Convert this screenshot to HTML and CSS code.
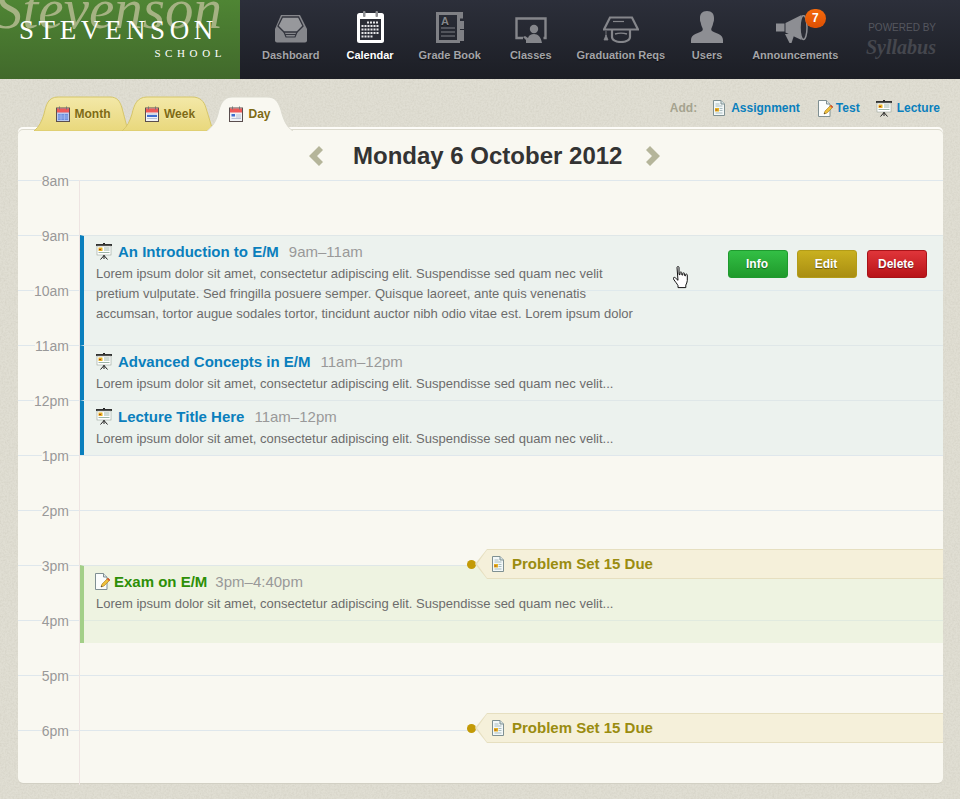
FILE: index.html

```html
<!DOCTYPE html>
<html>
<head>
    <title>Calendar - Stevenson School</title>
    <link rel="stylesheet" href="styles.css">
</head>
<body>
    <!-- shared little icons -->
    <svg class="defs" width="0" height="0">
        <defs>
            <filter id="paper">
                <feTurbulence type="fractalNoise" baseFrequency="0.55" numOctaves="3" seed="4"/>
                <feColorMatrix values="0 0 0 0 0.45  0 0 0 0 0.43  0 0 0 0 0.35  0 0 0 0.4 -0.14"/>
            </filter>
            <linearGradient id="tab-yellow" x1="0" y1="0" x2="0" y2="1">
                <stop offset="0" stop-color="#f3e8a8"/>
                <stop offset="1" stop-color="#e9d87c"/>
            </linearGradient>
            <symbol id="i-lecture" viewBox="0 0 16 17">
                <rect x="0" y="1" width="16" height="2" fill="#333"/>
                <rect x="1" y="3" width="14" height="9" fill="#fff" stroke="#9aa39a" stroke-width=".6"/>
                <rect x="2.500" y="4.500" width="4" height="3.500" fill="#e6b422"/>
                <rect x="3" y="6" width="2" height="1" fill="#b3401f"/>
                <path d="M8 5h5.500M8 7h5.500M2.500 9.500h11" stroke="#9db6a8" stroke-width="1"/>
                <path d="M8 12v4M8 12.500L4.500 16.500M8 12.500l3.500 4M7 .500h2" stroke="#222" stroke-width="1" fill="none"/>
            </symbol>
            <symbol id="i-doc" viewBox="0 0 12 16">
                <path d="M.5.500h7.500l3.500 3.500v11.500h-11z" fill="#f3f8f8" stroke="#7f9092"/>
                <path d="M8 .500v3.500h3.500" fill="#d7e3e5" stroke="#7f9092"/>
                <path d="M2.500 4h4M2.500 6h7M6.500 8.500h3M6.500 10.500h3M2.500 13h7" stroke="#a9bcc0"/>
                <rect x="2" y="8" width="4" height="3.500" fill="#e6b422"/>
                <rect x="2.500" y="9.500" width="2" height="1" fill="#a5401c"/>
            </symbol>
            <symbol id="i-test" viewBox="0 0 15 17">
                <path d="M.5.500h8l3.500 3.500v12.500h-11.500z" fill="#fbfdfd" stroke="#7f8f92"/>
                <path d="M8.500.500v3.500h3.500" fill="#dfe8ea" stroke="#7f8f92"/>
                <path d="M6 14l1-3 6-6 2 2-6 6z" fill="#eec03a" stroke="#a77a1b" stroke-width=".6"/>
                <path d="M12 6l2 2 1-1-2-2z" fill="#d6473a"/>
                <path d="M6 14l.500-1.500 1 1z" fill="#333"/>
            </symbol>
            <symbol id="i-cal-month" viewBox="0 0 14 16">
                <rect x=".5" y="2" width="13" height="13.500" fill="#b9c9ee" stroke="#5a4e4e"/>
                <rect x="1" y="2.500" width="12" height="4" fill="#ee5a58"/>
                <path d="M3.500 .5v3M10.500 .5v3" stroke="#777"/>
                <rect x="2" y="8" width="10" height="6" fill="#6f8fdc"/>
                <path d="M2 10h10M2 12h10M5 8v6M8.500 8v6" stroke="#a8bdf0" stroke-width=".7"/>
            </symbol>
            <symbol id="i-cal-week" viewBox="0 0 14 16">
                <rect x=".5" y="2" width="13" height="13.500" fill="#f1f3f6" stroke="#5a4e4e"/>
                <rect x="1" y="2.500" width="12" height="4" fill="#ee5a58"/>
                <path d="M3.500 .5v3M10.500 .5v3" stroke="#777"/>
                <rect x="2" y="9" width="10" height="2" fill="#3f6fd0"/>
                <path d="M2 8h10M2 12.500h10" stroke="#b8c2d6"/>
            </symbol>
            <symbol id="i-cal-day" viewBox="0 0 14 16">
                <rect x=".5" y="2" width="13" height="13.500" fill="#f1f3f6" stroke="#5a4e4e"/>
                <rect x="1" y="2.500" width="12" height="4" fill="#ee5a58"/>
                <path d="M3.500 .5v3M10.500 .5v3" stroke="#777"/>
                <rect x="2.500" y="8" width="3.500" height="2.500" fill="#3f6fd0"/>
                <path d="M7 9h5M2.500 12.500h9.500M7 11h5" stroke="#b8c2d6"/>
            </symbol>
        </defs>
    </svg>
    <svg class="paper" width="960" height="799"><rect width="960" height="799" filter="url(#paper)"/></svg>

    <header class="topbar">
        <div class="logo">
            <span class="logo-script">Stevenson</span>
            <span class="logo-name">STEVENSON</span>
            <span class="logo-sub">SCHOOL</span>
        </div>
        <nav class="nav">
            <a class="nav-item">
                <svg class="nav-icon" width="32" height="28" viewBox="0 0 32 28">
                    <path d="M6 0h19l7 14v11.500a2 2 0 0 1-2 2h-28a2 2 0 0 1-2-2v-11.500z" fill="#85868b"/>
                    <path d="M7.500 2h16l4.500 9-6 6h-13l-6-6z" fill="#97989c" stroke="#33353e" stroke-width="1.300"/>
                    <path d="M9 17l2 5h9l2-5M10 19.500h11" fill="none" stroke="#33353e" stroke-width="1.200"/>
                </svg>
                <span>Dashboard</span>
            </a>
            <a class="nav-item active">
                <svg class="nav-icon" width="27" height="32" viewBox="0 0 27 32">
                    <rect y="2" width="27" height="30" rx="2.500" fill="#fff"/>
                    <rect x="3" y="8" width="21" height="21" fill="#2b2d36"/>
                    <rect x="6" y="0" width="2.500" height="6" rx="1" fill="#8f9094"/>
                    <rect x="18.500" y="0" width="2.500" height="6" rx="1" fill="#8f9094"/>
                    <path d="M10 11.500h12M4.500 15h18M4.500 18.500h18M4.500 22h18M4.500 25.500h11" stroke="#e8e8ea" stroke-width="2" stroke-dasharray="2 1"/>
                </svg>
                <span>Calendar</span>
            </a>
            <a class="nav-item">
                <svg class="nav-icon" width="28" height="31" viewBox="0 0 28 31">
                    <path d="M1.500 1.500h21v28h-21zM22.500 1.500h3v5" fill="none" stroke="#7f8085" stroke-width="3"/>
                    <path d="M24 9h4v8h-4zM24 18h4v11h-4z" fill="#7f8085"/>
                    <text x="5" y="13" class="nav-icon-letter">A</text>
                    <path d="M5 16h14M5 20h14M5 24h14" stroke="#7f8085" stroke-width="1.200"/>
                </svg>
                <span>Grade Book</span>
            </a>
            <a class="nav-item">
                <svg class="nav-icon" width="32" height="26" viewBox="0 0 32 26">
                    <path d="M8 21h-6.500v-19.500h29v19.500h-2" fill="none" stroke="#85868b" stroke-width="2.400"/>
                    <circle cx="19" cy="12" r="4.200" fill="#85868b"/>
                    <path d="M11 26v-3l-3-3 2-1 3 2c1-3 3-4 6-4 4 0 7 3 8 9z" fill="#85868b"/>
                </svg>
                <span>Classes</span>
            </a>
            <a class="nav-item">
                <svg class="nav-icon" width="36" height="27" viewBox="0 0 36 27">
                    <path d="M7 1.500h22l6 12h-34z" fill="none" stroke="#85868b" stroke-width="2.200"/>
                    <path d="M10 5.500h11" stroke="#85868b" stroke-width="1.200"/>
                    <path d="M9 14v7c0 3 4 5 9 5s9-2 9-5v-7" fill="none" stroke="#85868b" stroke-width="2.200"/>
                    <path d="M12 18c3-1 9-1 12 0" fill="none" stroke="#85868b" stroke-width="1.500"/>
                    <path d="M3 19l2 5h-4zM3 15v5" fill="#85868b" stroke="#85868b" stroke-width=".8"/>
                </svg>
                <span>Graduation Reqs</span>
            </a>
            <a class="nav-item">
                <svg class="nav-icon" width="32" height="32" viewBox="0 0 32 32">
                    <path d="M16 0c5 0 7 3 7 7 0 2 0 3-.5 4s-.5 3-1.500 5-1 3 0 4c3 2 11 3 11 9v3h-32v-3c0-6 8-7 11-9 1-1 1-2 0-4s-1-4-1.500-5-.5-2-.5-4c0-4 2-7 7-7z" fill="#8d8e93"/>
                </svg>
                <span>Users</span>
            </a>
            <a class="nav-item">
                <span class="nav-badge-wrap">
                    <svg class="nav-icon" width="33" height="28" viewBox="0 0 33 28">
                        <path d="M0 8.500h8.500v8h-8.500z" fill="#8d8e93"/>
                        <path d="M9.500 8l16-8v25l-16-7.500z" fill="#8d8e93"/>
                        <path d="M9 19l8 0 1.500 0-3 9h-2z" fill="#8d8e93"/>
                        <ellipse cx="27.500" cy="12.500" rx="3.500" ry="12" fill="#2a2c35" stroke="#8d8e93" stroke-width="1.500"/>
                    </svg>
                    <b class="nav-badge">7</b>
                </span>
                <span>Announcements</span>
            </a>
        </nav>
        <div class="powered">
            <span class="powered-by">POWERED BY</span>
            <span class="powered-name">Syllabus</span>
        </div>
    </header>

    <main class="content">
        <div class="toolbar">
            <div class="tabs">
                <a class="tab tab-month">
                    <svg class="tab-bg" viewBox="0 0 94 35" preserveAspectRatio="none"><path fill="url(#tab-yellow)" d="M0 35C5 31 8 25 10 18 12 9 14 1 24 1H76C83 1 86 5 88 12L94 35Z"/></svg>
                    <svg class="ic" width="14" height="16"><use href="#i-cal-month"/></svg>
                    <span>Month</span>
                </a>
                <a class="tab tab-week">
                    <svg class="tab-bg" viewBox="0 0 91 35" preserveAspectRatio="none"><path fill="url(#tab-yellow)" d="M0 35C5 31 8 25 10 18 12 9 15 1 25 1H70C78 1 82 5 84 12L91 35Z"/></svg>
                    <svg class="ic" width="14" height="16"><use href="#i-cal-week"/></svg>
                    <span>Week</span>
                </a>
                <a class="tab tab-day">
                    <svg class="tab-bg" viewBox="0 0 86 35" preserveAspectRatio="none"><path fill="#f9f8f1" d="M0 35C5 31 9 26 11 18 13 9 16 1 25 1H60C68 1 71 5 74 14 76 22 79 31 86 35"/></svg>
                    <svg class="ic" width="14" height="16"><use href="#i-cal-day"/></svg>
                    <span>Day</span>
                </a>
            </div>
            <div class="add-links">
                <span class="add-label">Add:</span>
                <a class="add-link link-assign"><svg class="ic" width="12" height="16"><use href="#i-doc"/></svg>Assignment</a>
                <a class="add-link link-test"><svg class="ic" width="15" height="17"><use href="#i-test"/></svg>Test</a>
                <a class="add-link link-lecture"><svg class="ic" width="16" height="17"><use href="#i-lecture"/></svg>Lecture</a>
            </div>
        </div>

        <section class="panel">
            <div class="date-head">
                <svg class="arrow" width="14" height="20" viewBox="0 0 14 20"><path d="M10 0l4 4-6 6 6 6-4 4-10-10z"/></svg>
                <h1>Monday 6 October 2012</h1>
                <svg class="arrow" width="14" height="20" viewBox="0 0 14 20"><path d="M4 0l-4 4 6 6-6 6 4 4 10-10z"/></svg>
            </div>

            <div class="day-grid">
                <div class="hour"><div class="hour-label"><span>8am</span></div></div>
                <div class="hour"><div class="hour-label"><span>9am</span></div></div>
                <div class="hour"><div class="hour-label"><span>10am</span></div></div>
                <div class="hour"><div class="hour-label"><span>11am</span></div></div>
                <div class="hour"><div class="hour-label"><span>12pm</span></div></div>
                <div class="hour"><div class="hour-label"><span>1pm</span></div></div>
                <div class="hour"><div class="hour-label"><span>2pm</span></div></div>
                <div class="hour"><div class="hour-label"><span>3pm</span></div></div>
                <div class="hour"><div class="hour-label"><span>4pm</span></div></div>
                <div class="hour"><div class="hour-label"><span>5pm</span></div></div>
                <div class="hour"><div class="hour-label"><span>6pm</span></div></div>

                <article class="event lecture" style="top:55px;height:110px">
                    <div class="event-main">
                        <div class="event-title">
                            <svg class="ic" width="16" height="17"><use href="#i-lecture"/></svg>
                            <a>An Introduction to E/M</a>
                            <span class="event-time">9am–11am</span>
                        </div>
                        <p class="event-text">Lorem ipsum dolor sit amet, consectetur adipiscing elit. Suspendisse sed quam nec velit pretium vulputate. Sed fringilla posuere semper. Quisque laoreet, ante quis venenatis accumsan, tortor augue sodales tortor, tincidunt auctor nibh odio vitae est. Lorem ipsum dolor</p>
                    </div>
                    <div class="event-actions">
                        <button class="btn btn-info">Info</button>
                        <button class="btn btn-edit">Edit</button>
                        <button class="btn btn-delete">Delete</button>
                    </div>
                </article>

                <article class="event lecture" style="top:165px;height:55px">
                    <div class="event-main">
                        <div class="event-title">
                            <svg class="ic" width="16" height="17"><use href="#i-lecture"/></svg>
                            <a>Advanced Concepts in E/M</a>
                            <span class="event-time">11am–12pm</span>
                        </div>
                        <p class="event-text">Lorem ipsum dolor sit amet, consectetur adipiscing elit. Suspendisse sed quam nec velit...</p>
                    </div>
                </article>

                <article class="event lecture" style="top:220px;height:55px">
                    <div class="event-main">
                        <div class="event-title">
                            <svg class="ic" width="16" height="17"><use href="#i-lecture"/></svg>
                            <a>Lecture Title Here</a>
                            <span class="event-time">11am–12pm</span>
                        </div>
                        <p class="event-text">Lorem ipsum dolor sit amet, consectetur adipiscing elit. Suspendisse sed quam nec velit...</p>
                    </div>
                </article>

                <article class="event exam" style="top:385px;height:78px">
                    <div class="event-main">
                        <div class="event-title">
                            <svg class="ic" width="15" height="17"><use href="#i-test"/></svg>
                            <a>Exam on E/M</a>
                            <span class="event-time">3pm–4:40pm</span>
                        </div>
                        <p class="event-text">Lorem ipsum dolor sit amet, consectetur adipiscing elit. Suspendisse sed quam nec velit...</p>
                    </div>
                </article>

                <div class="due" style="top:369px">
                    <i class="due-dot"></i>
                    <div class="due-tag">
                        <svg class="ic" width="12" height="16"><use href="#i-doc"/></svg>
                        <span>Problem Set 15 Due</span>
                    </div>
                </div>
                <div class="due" style="top:533px">
                    <i class="due-dot"></i>
                    <div class="due-tag">
                        <svg class="ic" width="12" height="16"><use href="#i-doc"/></svg>
                        <span>Problem Set 15 Due</span>
                    </div>
                </div>

                <!-- mouse pointer -->
                <svg class="pointer" width="17" height="23" viewBox="0 0 17 23">
                    <path d="M4 1.500c0-1.300 2-1.300 2 0v7l1 .2v-2c0-1 1.800-1 1.800.2v2l1 .2v-1.500c0-1 1.800-1 1.800.2v1.800l1 .2v-1c0-1 1.700-1 1.700.3v5.500c0 2-1 3-1.500 4.500v2.500h-7.800v-2c-1-2-2.500-3.500-4.500-6.500-.8-1.500.7-2.300 1.800-1.300l2.700 2.500z" fill="#fff" stroke="#111" stroke-width="1"/>
                </svg>
            </div>
        </section>
    </main>
</body>
</html>
```

FILE: styles.css

```css
* {
    box-sizing: border-box;
}

body {
    margin: 0;
    height: 799px;
    overflow: hidden;
    background: #e0ded3;
    font-family: "Liberation Sans", Arial, sans-serif;
    position: relative;
}

a {
    text-decoration: none;
}

.defs {
    position: absolute;
}

.paper {
    position: absolute;
    top: 0;
    left: 0;
}

.ic {
    flex: none;
    display: block;
}

/* top bar */
.topbar {
    position: relative;
    display: flex;
    height: 79px;
    background: linear-gradient(#2c2f3a, #1c1e25);
}

.logo {
    position: relative;
    flex: none;
    width: 240px;
    overflow: hidden;
    background: linear-gradient(#4f8534, #41692b);
    font-family: "Liberation Serif", "Times New Roman", serif;
    color: #fff;
}

.logo-script {
    position: absolute;
    left: -6px;
    top: -24px;
    font-size: 57px;
    font-style: italic;
    color: #a5b283;
    white-space: nowrap;
}

.logo-name {
    position: absolute;
    left: 19px;
    top: 15px;
    font-size: 27px;
    letter-spacing: 4.600px;
    white-space: nowrap;
}

.logo-sub {
    position: absolute;
    right: 19px;
    top: 47px;
    font-size: 11px;
    letter-spacing: 4.600px;
    margin-right: -5px;
}

.nav {
    display: flex;
    gap: 27px;
    padding-left: 22px;
}

.nav-item {
    display: flex;
    flex-direction: column;
    align-items: center;
    justify-content: flex-end;
    height: 62px;
    font-size: 11px;
    line-height: 14px;
    font-weight: bold;
    color: #a3a4a8;
    text-shadow: 0 1px 1px #111;
}

/* labels are not evenly spaced in the nav */
.nav-item:nth-child(3) {
    margin-left: -2px;
}

.nav-item:nth-child(4) {
    margin-left: 2px;
}

.nav-item:nth-child(5) {
    margin-left: -2px;
}

.nav-item:nth-child(6) {
    margin-left: -1px;
}

.nav-item:nth-child(7) {
    margin-left: 2px;
}

.nav-item.active {
    color: #fff;
}

.nav-icon {
    display: block;
    margin-bottom: 5px;
}

.nav-icon-letter {
    font-size: 11px;
    font-weight: bold;
    fill: #85868b;
}

.nav-badge-wrap {
    position: relative;
    display: block;
    margin-right: 6px;
}

.nav-badge {
    position: absolute;
    left: 29px;
    top: -6px;
    width: 21px;
    height: 19px;
    border-radius: 10px;
    background: linear-gradient(#f56a0c, #dc4f03);
    color: #fff;
    font-size: 12px;
    line-height: 19px;
    text-align: center;
    text-shadow: none;
}

.powered {
    display: flex;
    flex-direction: column;
    align-items: flex-end;
    margin-left: auto;
    padding: 21px 24px 0 0;
    color: #55575f;
}

.powered-by {
    font-size: 10px;
    line-height: 13px;
}

.powered-name {
    font-family: "Liberation Serif", serif;
    font-size: 20px;
    line-height: 26px;
    font-style: italic;
    font-weight: bold;
    color: #45474e;
}

/* content */
.content {
    position: relative;
    padding: 17px 17px 0 18px;
}

.toolbar {
    display: flex;
    justify-content: space-between;
    align-items: flex-start;
    height: 31px;
}

.tabs {
    position: relative;
    z-index: 2;
    display: flex;
    padding-left: 16px;
}

.tab {
    position: relative;
    display: flex;
    align-items: center;
    justify-content: center;
    gap: 5px;
    height: 35px;
    font-size: 12px;
    font-weight: bold;
    color: #7e6a14;
    text-shadow: 0 1px 0 #f7eeb0;
}

.tab > .ic,
.tab > span {
    position: relative;
}

.tab-bg {
    position: absolute;
    inset: 0;
    width: 100%;
    height: 100%;
    stroke: #d6c66a;
    stroke-width: 1;
}

.tab-month {
    width: 94px;
    padding-left: 4px;
}

.tab-week {
    width: 91px;
    margin-left: -6px;
    padding-left: 5px;
}

.tab-day {
    width: 86px;
    margin-left: -6px;
    text-shadow: none;
}

.tab-day .tab-bg {
    stroke: #dcdbd0;
}

.add-links {
    display: flex;
    align-items: center;
    height: 22px;
    margin-top: 1px;
    padding-right: 3px;
    font-size: 12px;
    font-weight: bold;
}

.add-label {
    color: #a5a38f;
    margin-right: 16px;
}

.add-link {
    display: flex;
    align-items: center;
    gap: 6px;
    color: #0a7fbd;
}

.link-test {
    margin-left: 18px;
    gap: 3px;
}

.link-lecture {
    margin-left: 16px;
    gap: 5px;
}

/* day panel */
.panel {
    position: relative;
    height: 656px;
    border-radius: 5px;
    background: #f9f8f1;
    box-shadow: inset 0 2px 0 #fdfcf8, inset 0 3px 0 #dcdace, 0 1px 0 #d2d0c4;
}

.date-head {
    display: flex;
    align-items: center;
    justify-content: center;
    height: 53px;
    padding: 5px 0 0 8px;
}

.date-head h1 {
    margin: 0 25px 0 30px;
    width: 268px;
    font-size: 24px;
    line-height: 28px;
    font-weight: bold;
    color: #333;
    white-space: nowrap;
}

.arrow {
    fill: #b5b59a;
}

.day-grid {
    position: relative;
}

.hour {
    display: flex;
    height: 55px;
    border-top: 1px solid #dfe7ec;
}

.hour:last-of-type {
    height: 53px;
}

.hour-label {
    flex: none;
    width: 61px;
    height: 18px;
    margin-top: -9px;
    padding-right: 10px;
    text-align: right;
    font-size: 14px;
    line-height: 18px;
    color: #999;
}

.hour-label span {
    background: #f9f8f1;
}

/* the pink rule right of the hours */
.day-grid::before {
    content: "";
    position: absolute;
    left: 61px;
    top: 0;
    bottom: 0;
    width: 1px;
    background: #eee4e2;
}

.event {
    position: absolute;
    left: 62px;
    right: 0;
    display: flex;
    justify-content: space-between;
    padding: 5px 16px 0 12px;
    border-left: 4px solid #0a7fbd;
    border-top: 1px solid #dfe7e8;
}

.lecture {
    background: rgba(224, 235, 235, 0.5);
}

.exam {
    border-left-color: #a3cf88;
    background: rgba(228, 238, 210, 0.5);
}

.event-title {
    display: flex;
    align-items: center;
    gap: 6px;
    height: 20px;
}

.event-title a {
    font-size: 15px;
    font-weight: bold;
    color: #0a7fbd;
}

.exam .event-title {
    gap: 4px;
    margin-left: -1px;
}

.exam .event-title a {
    color: #2d8f07;
}

.event-time {
    margin-left: 4px;
    font-size: 15px;
    color: #999;
}

.event-text {
    width: 540px;
    margin: 3px 0 0;
    font-size: 13px;
    line-height: 20px;
    color: #6c6c6c;
}

.event-actions {
    display: flex;
    gap: 9px;
    margin-top: 9px;
}

.btn {
    width: 60px;
    height: 28px;
    padding: 0 2px 0 0;
    border-radius: 3px;
    font-family: inherit;
    font-size: 12px;
    font-weight: bold;
    color: #fff;
    text-shadow: 0 1px 1px rgba(0, 0, 0, 0.45);
}

.btn-info {
    border: 1px solid #1f9a2e;
    background: linear-gradient(#33bf45, #1f9a2b);
}

.btn-edit {
    border: 1px solid #b39c18;
    background: linear-gradient(#c9b01f, #a98e12);
}

.btn-delete {
    margin-left: 1px;
    border: 1px solid #a81318;
    background: linear-gradient(#e0353a, #b81418);
}

/* due markers */
.due {
    position: absolute;
    left: 449px;
    right: 0;
    display: flex;
    align-items: center;
    height: 30px;
}

.due-dot {
    flex: none;
    width: 9px;
    height: 9px;
    border-radius: 50%;
    background: #c39a07;
}

.due-tag {
    position: relative;
    flex: 1;
    display: flex;
    align-items: center;
    gap: 8px;
    height: 30px;
    margin-left: -1px;
    padding: 0 0 1px 17px;
    background: #e6dfc0;
    clip-path: polygon(12px 0, 100% 0, 100% 100%, 12px 100%, 0 50%);
    font-size: 15px;
    font-weight: bold;
    color: #9a8c10;
}

.due-tag::before {
    content: "";
    position: absolute;
    inset: 1px 0 1px 2px;
    background: #f5f0da;
    clip-path: polygon(10px 0, 100% 0, 100% 100%, 10px 100%, 0 50%);
}

.due-tag > * {
    position: relative;
}

.pointer {
    position: absolute;
    left: 655px;
    top: 86px;
}
```
